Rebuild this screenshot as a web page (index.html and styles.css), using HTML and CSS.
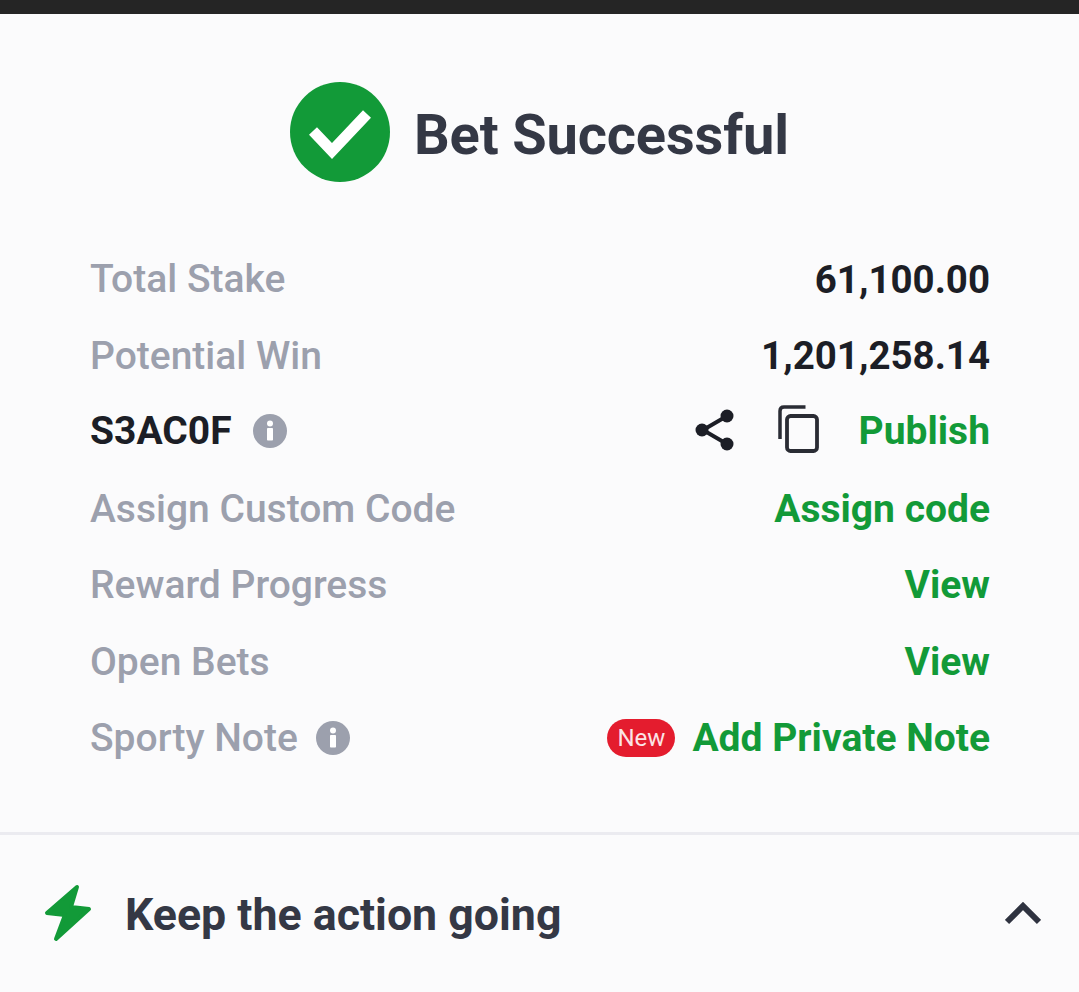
FILE: index.html
```html
<!DOCTYPE html>
<html lang="en">
<head>
<meta charset="utf-8">
<title>Bet Successful</title>
<link rel="stylesheet" href="styles.css">
</head>
<body>
<div class="topbar"></div>
<header class="result">
  <svg class="check" viewBox="0 0 100 100" aria-hidden="true">
    <circle cx="50" cy="50" r="50" fill="#129a38"/>
    <path d="M23 49 L42 69 L77 32" fill="none" stroke="#fff" stroke-width="11"/>
  </svg>
  <h1>Bet Successful</h1>
</header>
<section class="details">
  <div class="row"><span class="label">Total Stake</span><span class="value">61,100.00</span></div>
  <div class="row"><span class="label">Potential Win</span><span class="value">1,201,258.14</span></div>
  <div class="row row-code">
    <span class="label-group">
      <span class="code">S3AC0F</span>
      <svg class="info" viewBox="0 0 34 34" aria-hidden="true"><circle cx="17" cy="17" r="17" fill="#9ca0ad"/><rect x="14" y="14" width="6" height="12.500" rx="0.8" fill="#fff"/><circle cx="17" cy="9.500" r="3" fill="#fff"/></svg>
    </span>
    <span class="actions">
      <svg class="share" viewBox="0 0 40 44" aria-hidden="true">
        <path d="M32 8 L8 22 L32 36" fill="none" stroke="#1c1e26" stroke-width="4"/>
        <circle cx="32" cy="8" r="6.500" fill="#1c1e26"/><circle cx="7" cy="22" r="6.500" fill="#1c1e26"/><circle cx="32" cy="36" r="6.500" fill="#1c1e26"/>
      </svg>
      <svg class="copy" viewBox="0 0 44 48" aria-hidden="true">
        <path d="M29.500 2 H8 Q4 2 4 6 V34" fill="none" stroke="#2a2c34" stroke-width="3.500"/>
        <rect x="11" y="11" width="30" height="35" rx="3.500" fill="none" stroke="#2a2c34" stroke-width="3.800"/>
      </svg>
      <a class="link">Publish</a>
    </span>
  </div>
  <div class="row"><span class="label">Assign Custom Code</span><a class="link">Assign code</a></div>
  <div class="row"><span class="label">Reward Progress</span><a class="link">View</a></div>
  <div class="row"><span class="label">Open Bets</span><a class="link">View</a></div>
  <div class="row">
    <span class="label-group">
      <span class="label">Sporty Note</span>
      <svg class="info" viewBox="0 0 34 34" aria-hidden="true"><circle cx="17" cy="17" r="17" fill="#9ca0ad"/><rect x="14" y="14" width="6" height="12.500" rx="0.8" fill="#fff"/><circle cx="17" cy="9.500" r="3" fill="#fff"/></svg>
    </span>
    <span class="note">
      <span class="badge">New</span>
      <a class="link">Add Private Note</a>
    </span>
  </div>
</section>
<section class="action">
  <svg class="bolt" viewBox="0 0 48 58" aria-hidden="true">
    <path d="M33 3 L3 29 L21 31 L12 55 L45 25 L27 23 Z" fill="#129a38" stroke="#129a38" stroke-width="4" stroke-linejoin="round"/>
  </svg>
  <h2>Keep the action going</h2>
  <svg class="chevron" viewBox="0 0 36 24" aria-hidden="true"><path d="M2 20 L18 4 L34 20" fill="none" stroke="#2f3340" stroke-width="6"/></svg>
</section>
</body>
</html>
```
FILE: styles.css
```css
* { box-sizing: border-box; }
html, body { margin: 0; height: 100%; }
body {
  background: #fbfbfc;
  font-family: Roboto, "Liberation Sans", sans-serif;
  overflow: hidden;
}
.topbar { height: 14px; background: #252525; }
.result {
  display: flex;
  justify-content: center;
  align-items: center;
  gap: 24px;
  height: 227px;
  padding: 9px 0 0;
}
.check { width: 100px; height: 100px; flex: none; }
h1 {
  margin: 6px 0 0;
  font-size: 56px;
  line-height: 64px;
  font-weight: 700;
  color: #343845;
  letter-spacing: -0.15px;
}
.details {
  padding: 0 89px 55px 90px;
  border-bottom: 3px solid #ebebf0;
}
.row {
  display: flex;
  justify-content: space-between;
  align-items: center;
  height: 76.500px;
  font-size: 39px;
}
.row-code { padding-bottom: 3px; }
.label { color: #9ca0ad; font-weight: 500; }
.value { color: #1c1e26; font-weight: 700; font-size: 38.500px; }
.code { color: #1c1e26; font-weight: 700; }
.link { color: #129a38; font-weight: 700; }
.label-group, .actions, .note { display: flex; align-items: center; }
.label-group { gap: 21px; }
.label-group .label + .info { margin-left: -3px; }
.info { width: 34px; height: 34px; flex: none; }
.share { width: 40px; height: 44px; margin-top: -2px; }
.copy { width: 44px; height: 48px; margin: -3px 0 0 41px; }
.actions .link { margin-left: 39px; }
.badge {
  display: flex;
  align-items: center;
  justify-content: center;
  width: 68px;
  height: 38px;
  margin-right: 17px;
  border-radius: 19px;
  background: #e41c2e;
  color: #fbe4e6;
  font-size: 24px;
  font-weight: 400;
}
.action {
  display: flex;
  align-items: center;
  height: 157px;
  padding: 0 38px 0 44px;
}
.bolt { width: 48px; height: 58px; flex: none; }
h2 {
  flex: 1;
  margin: 3px 0 0 33px;
  font-size: 44.700px;
  line-height: 50px;
  font-weight: 700;
  color: #343845;
}
.chevron { width: 36px; height: 24px; flex: none; margin-top: 2px; }
```
